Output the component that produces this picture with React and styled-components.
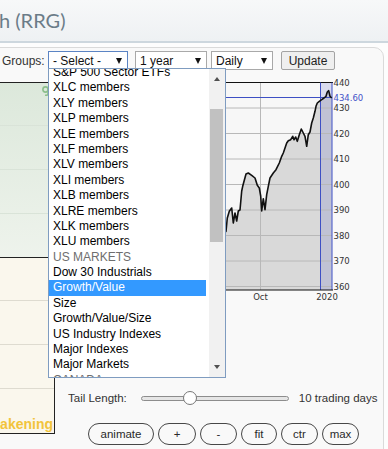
import React from 'react';
import styled, { createGlobalStyle } from 'styled-components';

const Global = createGlobalStyle`
  html, body { margin: 0; padding: 0; background: #fdfdfd; overflow: hidden; }
  body { font-family: "Liberation Sans", Arial, sans-serif; font-size: 12px; color: #222; }
`;

const Page = styled.div`
  width: 388px;
  height: 449px;
  overflow: hidden;
`;

const Header = styled.header`
  height: 43px;
  box-sizing: border-box;
  padding-top: 8px;
  background: linear-gradient(#f7f8f9, #eef1f3);
  border-bottom: 2px solid #cdd7de;
`;

const Title = styled.h1`
  margin: 0 0 0 -1px;
  font: 400 20px/24px Lato, "Liberation Sans", sans-serif;
  color: #6b7c88;
  white-space: nowrap;
`;

const Card = styled.section`
  margin: 4px 4px 0 -10px;
  height: 420px;
  border: 1px solid #dadada;
  border-top-right-radius: 10px;
  background: #f9f9f9;
`;

const Toolbar = styled.div`
  display: flex;
  align-items: center;
  height: 19px;
  margin-top: 3px;
  padding-left: 11px;
`;

const Label = styled.span`
  width: 46px;
  font-size: 12px;
  color: #333;
`;

const SelectBox = styled.div`
  position: relative;
  box-sizing: border-box;
  display: flex;
  align-items: center;
  width: ${p => p.$w}px;
  height: 19px;
  margin-left: ${p => p.$ml || 0}px;
  padding-left: 4px;
  border: 1px solid ${p => (p.$focused ? '#5b84c4' : '#a9a9a9')};
  background: #fff;
  font-size: 12px;
  color: #111;
`;

const Caret = styled.span`
  margin-left: auto;
  margin-right: 5px;
  width: 0;
  height: 0;
  border-left: 3.5px solid transparent;
  border-right: 3.5px solid transparent;
  border-top: 6px solid #111;
`;

const UpdateButton = styled.button`
  box-sizing: border-box;
  width: 54px;
  height: 19px;
  margin-left: 8px;
  padding: 0;
  border: 1px solid #a3a3a3;
  border-radius: 2px;
  background: #efefef;
  font: 12px "Liberation Sans", Arial, sans-serif;
  color: #222;
`;

const ListBox = styled.div`
  position: absolute;
  top: calc(100% - 1px);
  left: -1px;
  z-index: 5;
  box-sizing: border-box;
  width: 178px;
  height: 310px;
  display: flex;
  border: 1px solid #7f9cc0;
  background: #fff;
  overflow: hidden;
`;

const Options = styled.ul`
  flex: 1;
  list-style: none;
  margin: -4px 0 0;
  padding: 0 3px 0 0;
`;

const Option = styled.li`
  height: 15.4px;
  line-height: 15.4px;
  padding-left: 4px;
  white-space: nowrap;
  font-size: 12px;
  color: ${p => (p.$selected ? '#fff' : p.$group ? '#6e6e6e' : '#000')};
  background: ${p => (p.$selected ? '#3399ff' : 'transparent')};
`;

const Scrollbar = styled.div`
  width: 16px;
  flex: none;
  display: flex;
  flex-direction: column;
  background: #f1f1f1;
`;

const ScrollButton = styled.div`
  height: 20px;
  display: flex;
  align-items: center;
  justify-content: center;
  &::after {
    content: '';
    border-left: 3.5px solid transparent;
    border-right: 3.5px solid transparent;
    ${p => (p.$down ? 'border-top: 4px solid #505050;' : 'border-bottom: 4px solid #505050;')}
  }
`;

const Thumb = styled.div`
  width: 13px;
  height: 133px;
  margin: 20px 0 0 1px;
  background: #c1c1c1;
`;

const Spacer = styled.div`
  flex: 1;
`;

const Body = styled.div`
  display: flex;
  margin-top: 12px;
`;

const gridLines = c => `
  linear-gradient(${c}, ${c}) 0 42px / 100% 1px no-repeat,
  linear-gradient(${c}, ${c}) 0 86px / 100% 1px no-repeat,
  linear-gradient(${c}, ${c}) 0 130px / 100% 1px no-repeat`;

const Rrg = styled.div`
  flex: none;
  box-sizing: border-box;
  width: 64px;
  height: 352px;
  border-top: 1px solid #222;
  border-right: 1px solid #222;
  border-bottom: 1px solid #222;
  display: grid;
  grid-template-columns: minmax(0, 1fr);
  grid-template-rows: 175px minmax(0, 1fr);
`;

const Quadrant = styled.div`
  position: relative;
  overflow: hidden;
  display: flex;
  flex-direction: column;
  align-items: flex-end;
  justify-content: ${p => (p.$top ? 'flex-start' : 'flex-end')};
  border-bottom: ${p => (p.$top ? '1px solid #222' : 'none')};
  background: ${p =>
    p.$top
      ? `${gridLines('#d9e3d8')}, linear-gradient(#dce8db, #eef3ec)`
      : `${gridLines('#dedbd0')}, #faf7ed`};
`;

const QuadLabel = styled.span`
  flex: none;
  padding: 0 1px 1px 0;
  font-weight: 700;
  font-size: 14px;
  line-height: 15px;
  color: ${p => p.$color};
  white-space: nowrap;
`;

const TailMark = styled.svg`
  position: absolute;
  left: 51px;
  top: 3px;
`;

const RightCol = styled.div`
  flex: 1;
  display: flex;
  flex-direction: column;
`;

const ChartSvg = styled.svg`
  display: block;
  overflow: visible;
`;

const TailRow = styled.div`
  display: flex;
  align-items: center;
  height: 20px;
  margin-top: 84px;
  padding-left: 13px;
  font-size: 11.5px;
  color: #333;
`;

const Slider = styled.div`
  position: relative;
  box-sizing: border-box;
  width: 148px;
  height: 5px;
  margin: 0 10px 0 14px;
  border: 1px solid #8d8d8d;
  border-radius: 3px;
  background: #e6e6e6;
`;

const SliderThumb = styled.span`
  position: absolute;
  top: 50%;
  left: ${p => p.$pos}px;
  width: 14px;
  height: 14px;
  box-sizing: border-box;
  transform: translate(-50%, -50%);
  border: 1px solid #777;
  border-radius: 50%;
  background: #fff;
`;

const ButtonRow = styled.div`
  display: flex;
  gap: 4px;
  margin-top: 15px;
  padding-left: 33px;
`;

const PillButton = styled.button`
  box-sizing: border-box;
  width: ${p => p.$w}px;
  height: 22px;
  padding: 0;
  border: 1px solid #474747;
  border-radius: 11px;
  background: #f9f9f9;
  font: 11.5px "Liberation Sans", Arial, sans-serif;
  color: #2a2a2a;
`;

const options = [
  { label: 'S&P 500 Sector ETFs' },
  { label: 'XLC members' },
  { label: 'XLY members' },
  { label: 'XLP members' },
  { label: 'XLE members' },
  { label: 'XLF members' },
  { label: 'XLV members' },
  { label: 'XLI members' },
  { label: 'XLB members' },
  { label: 'XLRE members' },
  { label: 'XLK members' },
  { label: 'XLU members' },
  { label: 'US MARKETS', group: true },
  { label: 'Dow 30 Industrials' },
  { label: 'Growth/Value', selected: true },
  { label: 'Size' },
  { label: 'Growth/Value/Size' },
  { label: 'US Industry Indexes' },
  { label: 'Major Indexes' },
  { label: 'Major Markets' },
  { label: 'CANADA', group: true },
];

const price = [
  [150, 270], [160, 262], [170, 268], [180, 255], [190, 250], [200, 258], [210, 245], [218, 240],
  [226, 233.3], [227.3, 220], [229.3, 213.3], [231.7, 210], [233.3, 225], [235, 215], [236.7, 223],
  [238.3, 213], [240, 212], [241.7, 193], [242.7, 188.3], [246, 176], [248.3, 175], [251.7, 177.3],
  [255, 180], [257.3, 187.3], [259.3, 190], [260.7, 198], [261.7, 213], [263.3, 200.7], [265, 211.7],
  [266.7, 196.7], [268.3, 188.3], [270, 180], [273.3, 175], [276, 171.7], [279.3, 165], [281.7, 158.3],
  [283.3, 155], [285, 150], [286.7, 145], [288.3, 142.7], [290.7, 141.7], [292.7, 138.3], [294, 141.7],
  [295.7, 139], [297.3, 143.3], [299.3, 136.7], [301.3, 131], [303.3, 135], [305, 138.3], [306.7, 148.3],
  [308.3, 136.7], [310, 134], [311.7, 125], [313.3, 120], [315, 113.3], [316, 108.3], [317.3, 105],
  [319.3, 103.3], [321.7, 101.7], [324, 100], [326, 98.3], [327.3, 94], [328.7, 92.7], [330, 98.3],
  [331.7, 100],
];

const OX = 55;
const OY = 84;
const X = x => x - OX;
const Y = y => y - OY;
const yv = v => 0.5 + (440 - v) * 2.55;

function PriceChart() {
  const pts = price.map(([x, y]) => `${X(x)},${Y(y)}`).join(' ');
  const area = `${pts} ${X(331.7)},${Y(292)} ${X(150)},${Y(292)}`;
  const left = X(150);
  const right = X(332);
  const bottom = Y(292);
  const ticks = [430, 420, 410, 400, 390, 380, 370, 360];
  const labelFont = { fontFamily: '"DejaVu Sans", Verdana, sans-serif', fontSize: 8.5 };
  return (
    <ChartSvg width="328" height="222" viewBox="0 0 328 222">
      <rect x={left} y={0.5} width={right - left} height={bottom - 0.5} fill="#f7f7f7" />
      <polygon points={area} fill="#d9d9d9" />
      <rect x={X(320.5)} y={0.5} width={X(332) - X(320.5)} height={bottom - 0.5} fill="rgba(70,85,190,0.17)" />
      {ticks.map(v => (
        <line key={v} x1={left} x2={right} y1={yv(v)} y2={yv(v)} stroke="#b8b8b8" strokeWidth="1" />
      ))}
      <line x1={X(260.5)} x2={X(260.5)} y1={0.5} y2={bottom} stroke="#b8b8b8" strokeWidth="1" />
      <line x1={left} x2={X(333)} y1={0.5} y2={0.5} stroke="#111" strokeWidth="1" />
      <line x1={left} x2={right} y1={Y(99.5)} y2={Y(99.5)} stroke="#3d4fc4" strokeWidth="1" />
      <line x1={X(320.5)} x2={X(320.5)} y1={0.5} y2={bottom} stroke="#3d4fc4" strokeWidth="1" />
      <line x1={X(332)} x2={X(332)} y1={0.5} y2={bottom} stroke="#3d4fc4" strokeWidth="1" />
      <polyline points={pts} fill="none" stroke="#111" strokeWidth="1.6" strokeLinejoin="round" />
      <line x1={left} x2={X(333)} y1={bottom} y2={bottom} stroke="#111" strokeWidth="1.2" />
      {[440, ...ticks].map(v => (
        <text key={v} x={X(333.5)} y={yv(v) + 3.2} fill="#333" style={labelFont}>{v}</text>
      ))}
      <text x={X(333.5)} y={Y(99.5) + 3.2} fill="#4453c8" style={labelFont}>434.60</text>
      <text x={X(260.5)} y={Y(301.5)} fill="#333" textAnchor="middle" style={labelFont}>Oct</text>
      <text x={X(327)} y={Y(301.5)} fill="#333" textAnchor="middle" style={labelFont}>2020</text>
    </ChartSvg>
  );
}

export default function App() {
  return (
    <Page>
      <Global />
      <Header>
        <Title>h (RRG)</Title>
      </Header>
      <Card>
        <Toolbar>
          <Label>Groups:</Label>
          <SelectBox $w={80} $focused>
            - Select -
            <Caret />
            <ListBox>
              <Options>
                {options.map(o => (
                  <Option key={o.label} $group={o.group} $selected={o.selected}>{o.label}</Option>
                ))}
              </Options>
              <Scrollbar>
                <ScrollButton />
                <Thumb />
                <Spacer />
                <ScrollButton $down />
              </Scrollbar>
            </ListBox>
          </SelectBox>
          <SelectBox $w={72} $ml={7}>1 year<Caret /></SelectBox>
          <SelectBox $w={62} $ml={4}>Daily<Caret /></SelectBox>
          <UpdateButton>Update</UpdateButton>
        </Toolbar>
        <Body>
          <Rrg>
            <Quadrant $top>
              <TailMark width="8" height="10" viewBox="0 0 8 10">
                <circle cx="3.5" cy="3.5" r="2.6" fill="none" stroke="#8cbf8c" strokeWidth="1.6" />
                <path d="M6 2 V7.5 Q6 9.5 3 9.3" fill="none" stroke="#8cbf8c" strokeWidth="1.6" />
              </TailMark>
            </Quadrant>
            <Quadrant>
              <QuadLabel $color="#f2c43c">Weakening</QuadLabel>
            </Quadrant>
          </Rrg>
          <RightCol>
            <PriceChart />
            <TailRow>
              Tail Length:
              <Slider>
                <SliderThumb $pos={48} />
              </Slider>
              10 trading days
            </TailRow>
            <ButtonRow>
              <PillButton $w={66}>animate</PillButton>
              <PillButton $w={38}>+</PillButton>
              <PillButton $w={37}>-</PillButton>
              <PillButton $w={36}>fit</PillButton>
              <PillButton $w={37}>ctr</PillButton>
              <PillButton $w={37}>max</PillButton>
            </ButtonRow>
          </RightCol>
        </Body>
      </Card>
    </Page>
  );
}
